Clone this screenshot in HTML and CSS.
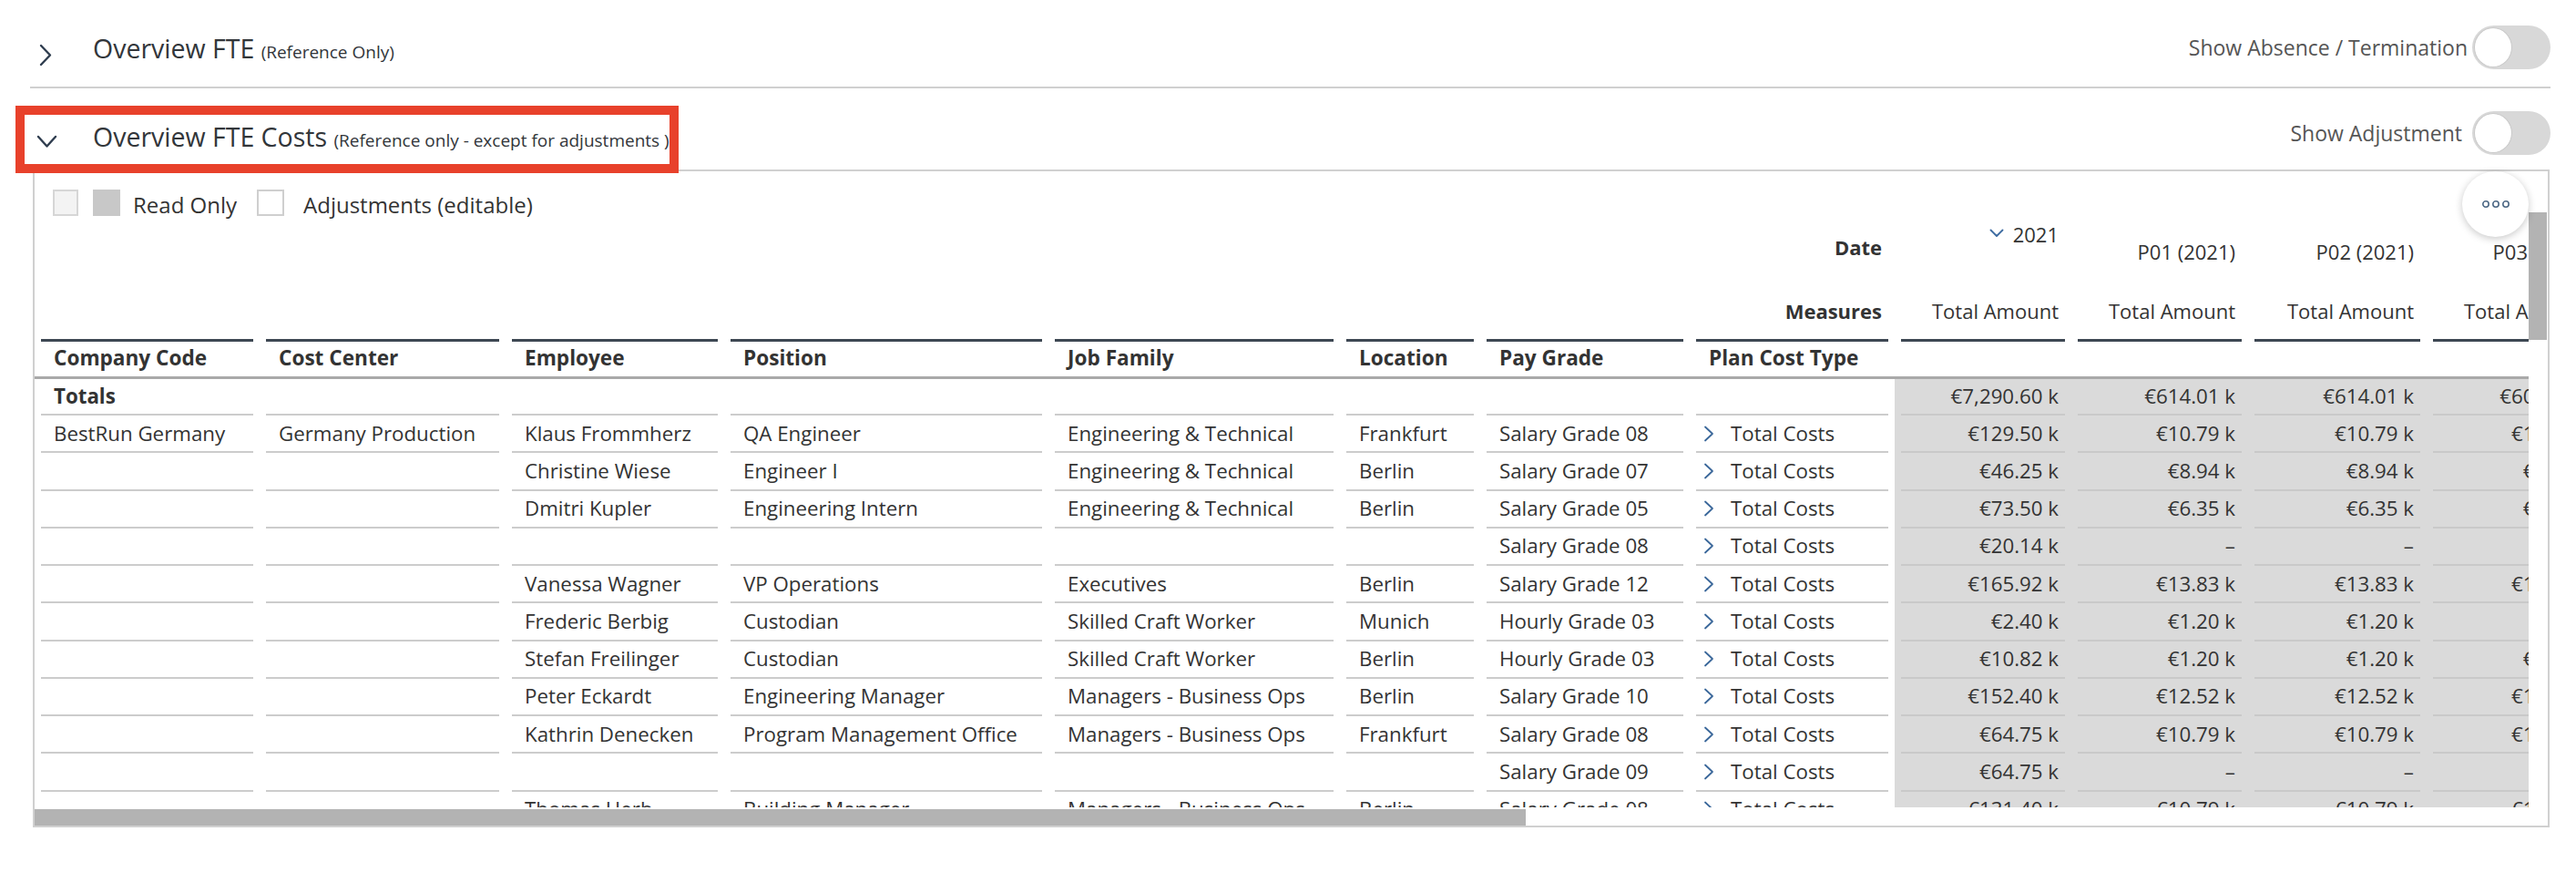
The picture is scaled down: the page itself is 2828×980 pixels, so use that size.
FILE: index.html
```html
<!DOCTYPE html>
<html lang="en">
<head>
<meta charset="utf-8">
<title>Overview FTE Costs</title>
<link rel="stylesheet" href="styles.css">
</head>
<body>
<div class="page">
  <div class="sec-head sec1">
    <span class="chev chev-right"><svg width="14" height="25" viewBox="0 0 14 25"><path d="M2 2 L12 12.5 L2 23" fill="none" stroke="#2f3d4f" stroke-width="2.4" stroke-linecap="round" stroke-linejoin="round"/></svg></span>
    <div class="title">Overview FTE <span class="sub">(Reference Only)</span></div>
    <div class="spacer"></div>
    <div class="switch"><span class="sw-label sw-label1">Show Absence / Termination</span><span class="toggle"><span class="knob"></span></span></div>
  </div>
  <div class="sec-head sec2">
    <span class="chev chev-down"><svg width="23" height="15" viewBox="0 0 23 15"><path d="M2 2 L11.5 12.5 L21 2" fill="none" stroke="#2f3d4f" stroke-width="2.4" stroke-linecap="round" stroke-linejoin="round"/></svg></span>
    <div class="title">Overview FTE Costs <span class="sub">(Reference only - except for adjustments )</span></div>
    <div class="spacer"></div>
    <div class="switch"><span class="sw-label sw-label2">Show Adjustment</span><span class="toggle"><span class="knob"></span></span></div>
  </div>

  <div class="panel">
    <div class="more"><svg width="32" height="10" viewBox="0 0 32 10"><circle cx="5" cy="5" r="3.2" fill="none" stroke="#4f6a86" stroke-width="1.6"/><circle cx="16" cy="5" r="3.2" fill="none" stroke="#4f6a86" stroke-width="1.6"/><circle cx="27" cy="5" r="3.2" fill="none" stroke="#4f6a86" stroke-width="1.6"/></svg></div>
    <div class="legend">
      <span class="lg lg-empty"></span>
      <span class="lg lg-ro"></span>
      <span class="lg-text">Read Only</span>
      <span class="lg lg-edit"></span>
      <span class="lg-text lg-text2">Adjustments (editable)</span>
    </div>
    <div class="area">
      <div class="viewport">
        <div class="grid hrow hdate">
          <div class="c"></div><div class="c"></div><div class="c"></div><div class="c"></div><div class="c"></div><div class="c"></div><div class="c"></div>
          <div class="c"><div class="hi right bold pt-date">Date</div></div>
          <div class="c"><div class="hi right pt-year"><svg class="ychev" width="16" height="10" viewBox="0 0 16 10"><path d="M1.5 1.5 L8 8 L14.5 1.5" fill="none" stroke="#3b6aa0" stroke-width="1.8" stroke-linecap="round" stroke-linejoin="round"/></svg>2021</div></div>
          <div class="c"><div class="hi right pt-per">P01 (2021)</div></div>
          <div class="c"><div class="hi right pt-per">P02 (2021)</div></div>
          <div class="c"><div class="hi right pt-per">P03 (2021)</div></div>
        </div>
        <div class="grid hrow hmeas">
          <div class="c"></div><div class="c"></div><div class="c"></div><div class="c"></div><div class="c"></div><div class="c"></div><div class="c"></div>
          <div class="c"><div class="hi right bold pt-meas">Measures</div></div>
          <div class="c"><div class="hi right pt-meas">Total Amount</div></div>
          <div class="c"><div class="hi right pt-meas">Total Amount</div></div>
          <div class="c"><div class="hi right pt-meas">Total Amount</div></div>
          <div class="c"><div class="hi right pt-meas">Total Amount</div></div>
        </div>
        <div class="grid hrow hdim">
          <div class="c"><div class="di">Company Code</div></div>
          <div class="c"><div class="di">Cost Center</div></div>
          <div class="c"><div class="di">Employee</div></div>
          <div class="c"><div class="di">Position</div></div>
          <div class="c"><div class="di">Job Family</div></div>
          <div class="c"><div class="di">Location</div></div>
          <div class="c"><div class="di">Pay Grade</div></div>
          <div class="c"><div class="di">Plan Cost Type</div></div>
          <div class="c"><div class="di"></div></div>
          <div class="c"><div class="di"></div></div>
          <div class="c"><div class="di"></div></div>
          <div class="c"><div class="di"></div></div>
        </div>

        <div class="grid brow totals">
          <div class="c"><div class="i bold">Totals</div></div>
          <div class="c"><div class="i"></div></div><div class="c"><div class="i"></div></div><div class="c"><div class="i"></div></div><div class="c"><div class="i"></div></div><div class="c"><div class="i"></div></div><div class="c"><div class="i"></div></div><div class="c"><div class="i"></div></div>
          <div class="c d"><div class="i">€7,290.60 k</div></div>
          <div class="c d"><div class="i">€614.01 k</div></div>
          <div class="c d"><div class="i">€614.01 k</div></div>
          <div class="c d"><div class="i">€606.52 k</div></div>
        </div>

        <div class="grid brow">
          <div class="c"><div class="i">BestRun Germany</div></div>
          <div class="c"><div class="i">Germany Production</div></div>
          <div class="c"><div class="i">Klaus Frommherz</div></div>
          <div class="c"><div class="i">QA Engineer</div></div>
          <div class="c"><div class="i">Engineering &amp; Technical</div></div>
          <div class="c"><div class="i">Frankfurt</div></div>
          <div class="c"><div class="i">Salary Grade 08</div></div>
          <div class="c p"><div class="i"><svg class="pchev" width="12" height="18" viewBox="0 0 12 18"><path d="M2 1.5 L10 9 L2 16.5" fill="none" stroke="#3a679a" stroke-width="1.8" stroke-linecap="round" stroke-linejoin="round"/></svg>Total Costs</div></div>
          <div class="c d"><div class="i">€129.50 k</div></div>
          <div class="c d"><div class="i">€10.79 k</div></div>
          <div class="c d"><div class="i">€10.79 k</div></div>
          <div class="c d"><div class="i">€10.79 k</div></div>
        </div>

        <div class="grid brow">
          <div class="c"><div class="i"></div></div>
          <div class="c"><div class="i"></div></div>
          <div class="c"><div class="i">Christine Wiese</div></div>
          <div class="c"><div class="i">Engineer I</div></div>
          <div class="c"><div class="i">Engineering &amp; Technical</div></div>
          <div class="c"><div class="i">Berlin</div></div>
          <div class="c"><div class="i">Salary Grade 07</div></div>
          <div class="c p"><div class="i"><svg class="pchev" width="12" height="18" viewBox="0 0 12 18"><path d="M2 1.5 L10 9 L2 16.5" fill="none" stroke="#3a679a" stroke-width="1.8" stroke-linecap="round" stroke-linejoin="round"/></svg>Total Costs</div></div>
          <div class="c d"><div class="i">€46.25 k</div></div>
          <div class="c d"><div class="i">€8.94 k</div></div>
          <div class="c d"><div class="i">€8.94 k</div></div>
          <div class="c d"><div class="i">€8.94 k</div></div>
        </div>

        <div class="grid brow">
          <div class="c"><div class="i"></div></div>
          <div class="c"><div class="i"></div></div>
          <div class="c"><div class="i">Dmitri Kupler</div></div>
          <div class="c"><div class="i">Engineering Intern</div></div>
          <div class="c"><div class="i">Engineering &amp; Technical</div></div>
          <div class="c"><div class="i">Berlin</div></div>
          <div class="c"><div class="i">Salary Grade 05</div></div>
          <div class="c p"><div class="i"><svg class="pchev" width="12" height="18" viewBox="0 0 12 18"><path d="M2 1.5 L10 9 L2 16.5" fill="none" stroke="#3a679a" stroke-width="1.8" stroke-linecap="round" stroke-linejoin="round"/></svg>Total Costs</div></div>
          <div class="c d"><div class="i">€73.50 k</div></div>
          <div class="c d"><div class="i">€6.35 k</div></div>
          <div class="c d"><div class="i">€6.35 k</div></div>
          <div class="c d"><div class="i">€6.35 k</div></div>
        </div>

        <div class="grid brow">
          <div class="c"><div class="i"></div></div>
          <div class="c"><div class="i"></div></div>
          <div class="c"><div class="i"></div></div>
          <div class="c"><div class="i"></div></div>
          <div class="c"><div class="i"></div></div>
          <div class="c"><div class="i"></div></div>
          <div class="c"><div class="i">Salary Grade 08</div></div>
          <div class="c p"><div class="i"><svg class="pchev" width="12" height="18" viewBox="0 0 12 18"><path d="M2 1.5 L10 9 L2 16.5" fill="none" stroke="#3a679a" stroke-width="1.8" stroke-linecap="round" stroke-linejoin="round"/></svg>Total Costs</div></div>
          <div class="c d"><div class="i">€20.14 k</div></div>
          <div class="c d"><div class="i">–</div></div>
          <div class="c d"><div class="i">–</div></div>
          <div class="c d"><div class="i">–</div></div>
        </div>

        <div class="grid brow">
          <div class="c"><div class="i"></div></div>
          <div class="c"><div class="i"></div></div>
          <div class="c"><div class="i">Vanessa Wagner</div></div>
          <div class="c"><div class="i">VP Operations</div></div>
          <div class="c"><div class="i">Executives</div></div>
          <div class="c"><div class="i">Berlin</div></div>
          <div class="c"><div class="i">Salary Grade 12</div></div>
          <div class="c p"><div class="i"><svg class="pchev" width="12" height="18" viewBox="0 0 12 18"><path d="M2 1.5 L10 9 L2 16.5" fill="none" stroke="#3a679a" stroke-width="1.8" stroke-linecap="round" stroke-linejoin="round"/></svg>Total Costs</div></div>
          <div class="c d"><div class="i">€165.92 k</div></div>
          <div class="c d"><div class="i">€13.83 k</div></div>
          <div class="c d"><div class="i">€13.83 k</div></div>
          <div class="c d"><div class="i">€13.83 k</div></div>
        </div>

        <div class="grid brow">
          <div class="c"><div class="i"></div></div>
          <div class="c"><div class="i"></div></div>
          <div class="c"><div class="i">Frederic Berbig</div></div>
          <div class="c"><div class="i">Custodian</div></div>
          <div class="c"><div class="i">Skilled Craft Worker</div></div>
          <div class="c"><div class="i">Munich</div></div>
          <div class="c"><div class="i">Hourly Grade 03</div></div>
          <div class="c p"><div class="i"><svg class="pchev" width="12" height="18" viewBox="0 0 12 18"><path d="M2 1.5 L10 9 L2 16.5" fill="none" stroke="#3a679a" stroke-width="1.8" stroke-linecap="round" stroke-linejoin="round"/></svg>Total Costs</div></div>
          <div class="c d"><div class="i">€2.40 k</div></div>
          <div class="c d"><div class="i">€1.20 k</div></div>
          <div class="c d"><div class="i">€1.20 k</div></div>
          <div class="c d"><div class="i">–</div></div>
        </div>

        <div class="grid brow">
          <div class="c"><div class="i"></div></div>
          <div class="c"><div class="i"></div></div>
          <div class="c"><div class="i">Stefan Freilinger</div></div>
          <div class="c"><div class="i">Custodian</div></div>
          <div class="c"><div class="i">Skilled Craft Worker</div></div>
          <div class="c"><div class="i">Berlin</div></div>
          <div class="c"><div class="i">Hourly Grade 03</div></div>
          <div class="c p"><div class="i"><svg class="pchev" width="12" height="18" viewBox="0 0 12 18"><path d="M2 1.5 L10 9 L2 16.5" fill="none" stroke="#3a679a" stroke-width="1.8" stroke-linecap="round" stroke-linejoin="round"/></svg>Total Costs</div></div>
          <div class="c d"><div class="i">€10.82 k</div></div>
          <div class="c d"><div class="i">€1.20 k</div></div>
          <div class="c d"><div class="i">€1.20 k</div></div>
          <div class="c d"><div class="i">€1.20 k</div></div>
        </div>

        <div class="grid brow">
          <div class="c"><div class="i"></div></div>
          <div class="c"><div class="i"></div></div>
          <div class="c"><div class="i">Peter Eckardt</div></div>
          <div class="c"><div class="i">Engineering Manager</div></div>
          <div class="c"><div class="i">Managers - Business Ops</div></div>
          <div class="c"><div class="i">Berlin</div></div>
          <div class="c"><div class="i">Salary Grade 10</div></div>
          <div class="c p"><div class="i"><svg class="pchev" width="12" height="18" viewBox="0 0 12 18"><path d="M2 1.5 L10 9 L2 16.5" fill="none" stroke="#3a679a" stroke-width="1.8" stroke-linecap="round" stroke-linejoin="round"/></svg>Total Costs</div></div>
          <div class="c d"><div class="i">€152.40 k</div></div>
          <div class="c d"><div class="i">€12.52 k</div></div>
          <div class="c d"><div class="i">€12.52 k</div></div>
          <div class="c d"><div class="i">€12.52 k</div></div>
        </div>

        <div class="grid brow">
          <div class="c"><div class="i"></div></div>
          <div class="c"><div class="i"></div></div>
          <div class="c"><div class="i">Kathrin Denecken</div></div>
          <div class="c"><div class="i">Program Management Office</div></div>
          <div class="c"><div class="i">Managers - Business Ops</div></div>
          <div class="c"><div class="i">Frankfurt</div></div>
          <div class="c"><div class="i">Salary Grade 08</div></div>
          <div class="c p"><div class="i"><svg class="pchev" width="12" height="18" viewBox="0 0 12 18"><path d="M2 1.5 L10 9 L2 16.5" fill="none" stroke="#3a679a" stroke-width="1.8" stroke-linecap="round" stroke-linejoin="round"/></svg>Total Costs</div></div>
          <div class="c d"><div class="i">€64.75 k</div></div>
          <div class="c d"><div class="i">€10.79 k</div></div>
          <div class="c d"><div class="i">€10.79 k</div></div>
          <div class="c d"><div class="i">€10.79 k</div></div>
        </div>

        <div class="grid brow">
          <div class="c"><div class="i"></div></div>
          <div class="c"><div class="i"></div></div>
          <div class="c"><div class="i"></div></div>
          <div class="c"><div class="i"></div></div>
          <div class="c"><div class="i"></div></div>
          <div class="c"><div class="i"></div></div>
          <div class="c"><div class="i">Salary Grade 09</div></div>
          <div class="c p"><div class="i"><svg class="pchev" width="12" height="18" viewBox="0 0 12 18"><path d="M2 1.5 L10 9 L2 16.5" fill="none" stroke="#3a679a" stroke-width="1.8" stroke-linecap="round" stroke-linejoin="round"/></svg>Total Costs</div></div>
          <div class="c d"><div class="i">€64.75 k</div></div>
          <div class="c d"><div class="i">–</div></div>
          <div class="c d"><div class="i">–</div></div>
          <div class="c d"><div class="i">–</div></div>
        </div>

        <div class="grid brow">
          <div class="c"><div class="i"></div></div>
          <div class="c"><div class="i"></div></div>
          <div class="c"><div class="i">Thomas Herb</div></div>
          <div class="c"><div class="i">Building Manager</div></div>
          <div class="c"><div class="i">Managers - Business Ops</div></div>
          <div class="c"><div class="i">Berlin</div></div>
          <div class="c"><div class="i">Salary Grade 08</div></div>
          <div class="c p"><div class="i"><svg class="pchev" width="12" height="18" viewBox="0 0 12 18"><path d="M2 1.5 L10 9 L2 16.5" fill="none" stroke="#3a679a" stroke-width="1.8" stroke-linecap="round" stroke-linejoin="round"/></svg>Total Costs</div></div>
          <div class="c d"><div class="i">€131.40 k</div></div>
          <div class="c d"><div class="i">€10.79 k</div></div>
          <div class="c d"><div class="i">€10.79 k</div></div>
          <div class="c d"><div class="i">€10.79 k</div></div>
        </div>
      </div>
      <div class="vscroll"><div class="vthumb"></div></div>
    </div>
    <div class="hscroll"><div class="hthumb"></div></div>
  </div>

  <div class="annot"></div>
</div>
</body>
</html>
```

FILE: styles.css
```css
* { box-sizing: border-box; }
html, body { margin: 0; padding: 0; background: #fff; }
body {
  font-family: "Open Sans", "Liberation Sans", sans-serif;
  color: #333;
  width: 2828px;
  height: 980px;
  overflow: hidden;
}
.page {
  position: relative;
  padding: 0 28px 0 33px;
}

/* section headers */
.sec-head {
  display: flex;
  align-items: flex-start;
}
.sec1 {
  height: 97px;
  padding-top: 28px;
  border-bottom: 2px solid #d0d0d0;
}
.sec2 {
  height: 89px;
  padding-top: 25px;
}
.chev { display: block; width: 69px; flex: none; }
.chev svg { display: block; }
.chev-right svg { margin: 20px 0 0 10px; }
.chev-down svg { margin: 26px 0 0 7px; }
.title {
  font-size: 28.5px;
  line-height: 38px;
  color: #32363a;
  white-space: nowrap;
}
.sec1 .title { margin-top: 6px; }
.sec2 .title { margin-top: 9px; }
.title .sub { font-size: 19px; }
.spacer { flex: 1; }
.switch {
  display: flex;
  align-items: center;
  height: 48px;
}
.sw-label {
  font-size: 23px;
  color: #555;
  white-space: nowrap;
}
.sw-label1 { margin-right: 5px; }
.sw-label2 { margin-right: 11px; }
.toggle {
  display: flex;
  align-items: center;
  width: 86px;
  height: 48px;
  border-radius: 24px;
  background: #d8d8d8;
  padding: 0 2px;
}
.knob {
  width: 42px;
  height: 44px;
  border-radius: 50%;
  background: #fff;
  border: 1px solid #c9c9c9;
}

/* panel */
.panel {
  position: relative;
  margin: 0 1px 0 3px;
  border: 2px solid #d0d0d0;
}
.more {
  position: absolute;
  top: 0;
  right: 21px;
  width: 73px;
  height: 72px;
  border-radius: 50%;
  background: #fff;
  box-shadow: 0 2px 8px rgba(0,0,0,0.22);
  display: flex;
  align-items: center;
  justify-content: center;
  z-index: 2;
}
.more svg { display: block; }
.legend {
  display: flex;
  align-items: center;
  height: 29px;
  margin: 20px 0 3px 20px;
}
.lg { display: block; height: 29px; flex: none; }
.lg-empty { width: 28px; background: #f3f3f3; border: 2px solid #d6d6d6; }
.lg-ro { width: 30px; background: #c8c8c8; margin-left: 16px; }
.lg-edit { width: 30px; background: #fff; border: 2px solid #cfcfcf; margin-left: 22px; }
.lg-text {
  font-size: 24px;
  line-height: 30px;
  padding-top: 4px;
  margin-left: 14px;
  color: #333;
  white-space: nowrap;
}
.lg-text2 { margin-left: 21px; }

.area {
  display: flex;
  height: 646px;
}
.viewport {
  flex: 1;
  overflow: hidden;
  height: 646px;
}
.vscroll {
  width: 20px;
  margin-right: 1px;
  flex: none;
}
.vthumb {
  height: 140px;
  margin-top: -7px;
  background: #b3b3b3;
}
.hscroll {
  height: 18px;
  margin-top: 2px;
}
.hthumb {
  width: 1637px;
  height: 18px;
  background: #b3b3b3;
}

/* table grid */
.grid {
  display: grid;
  grid-template-columns: 247px 270px 240px 356px 320px 154px 230px 225px 194px 194px 196px 194px;
  width: 2820px;
}
.c {
  padding: 0 7px;
  min-width: 0;
}
.hrow { align-items: stretch; }
.hdate { height: 64px; }
.hmeas { height: 68px; }
.hi {
  font-size: 22px;
  line-height: 30px;
  white-space: nowrap;
  display: flex;
  align-items: center;
}
.right { justify-content: flex-end; padding-right: 7px; }
.bold { font-weight: 700; }
.pt-date { padding-top: 16px; }
.pt-year { padding-top: 2px; }
.pt-per { padding-top: 21px; }
.pt-meas { padding-top: 22px; }
.ychev { margin-right: 10px; margin-bottom: 2px; }

.hdim {
  height: 44px;
  border-bottom: 3px solid #a9a9a9;
}
.di {
  height: 100%;
  border-top: 3px solid #3e4853;
  padding: 3px 0 0 14px;
  font-size: 22.6px;
  line-height: 30px;
  font-weight: 700;
  white-space: nowrap;
}

.brow { height: 41.25px; }
.brow.totals { height: 40px; }
.i {
  height: 100%;
  border-bottom: 2px solid #cccccc;
  display: flex;
  align-items: center;
  padding-left: 14px;
  font-size: 22.3px;
  line-height: 30px;
  white-space: nowrap;
  overflow: hidden;
}
.d { background: #dadada; }
.d .i {
  border-bottom-color: #c9c9c9;
  justify-content: flex-end;
  padding: 0 7px 0 0;
}
.p .i { padding-left: 8px; }
.pchev { flex: none; margin-right: 18px; }

/* screenshot annotation */
.annot {
  position: absolute;
  left: 17px;
  top: 116px;
  width: 728px;
  height: 74px;
  border: 10px solid #e8412b;
  pointer-events: none;
}
```
